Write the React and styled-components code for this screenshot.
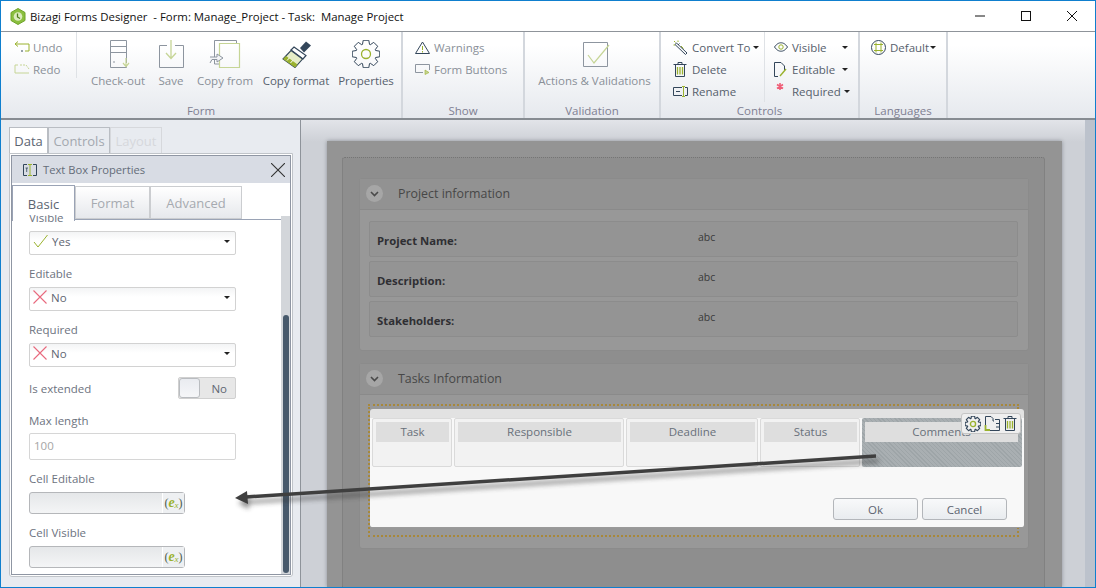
import React from 'react';
import styled, { createGlobalStyle } from 'styled-components';

const GlobalStyle = createGlobalStyle`
  html, body { margin: 0; padding: 0; background: #fff; }
  * { box-sizing: border-box; }
  body { font-family: "Open Sans", "Noto Sans", sans-serif; }
`;

const DARK = '#33465a';
const GREEN = '#9ab22e';
const FADE = '#8d959f';
const PALE = '#c6d596';

// gear outline used by Properties and the column toolbar
const gearPath = (c, outer, inner, teeth) => {
  const pts = [];
  const step = (Math.PI * 2) / teeth;
  for (let i = 0; i < teeth; i++) {
    const a = i * step - Math.PI / 2;
    [[-0.3, inner], [-0.17, outer], [0.17, outer], [0.3, inner]].forEach(([o, r]) => {
      pts.push(`${(c + Math.cos(a + o * step * 1.5) * r).toFixed(2)} ${(c + Math.sin(a + o * step * 1.5) * r).toFixed(2)}`);
    });
  }
  return `M${pts.join('L')}Z`;
};

const Window = styled.div`
  position: relative;
  width: 1096px;
  height: 588px;
  overflow: hidden;
  display: flex;
  flex-direction: column;
  border: 1px solid #0f7fce;
  background: #fff;
`;

const TitleBar = styled.div`
  height: 30px;
  flex: none;
  display: flex;
  align-items: center;
  padding-left: 9px;
  background: #fff;
`;

const TitleText = styled.div`
  margin-left: 4px;
  font-size: 11.4px;
  color: #111;
  white-space: pre;
`;

const WindowButtons = styled.div`
  margin-left: auto;
  display: flex;
  align-items: center;
`;

const WindowButton = styled.div`
  width: 46px;
  height: 30px;
  display: flex;
  align-items: center;
  justify-content: center;
`;

const Ribbon = styled.div`
  height: 89px;
  flex: none;
  display: flex;
  background: linear-gradient(#fff 15%, #e6e9ee);
  border-top: 1px solid #8f949a;
  border-bottom: 2px solid #878c92;
`;

const Group = styled.div`
  width: ${(p) => p.$w}px;
  flex: none;
  display: flex;
  flex-direction: column;
  border-right: 2px solid #d3d7dd;
`;

const GroupBody = styled.div`
  flex: 1;
  display: flex;
  min-height: 0;
`;

const GroupLabel = styled.div`
  height: 16px;
  margin-bottom: -1px;
  text-align: center;
  font-size: 11.5px;
  line-height: 16px;
  color: #7f8092;
`;

const SmallColumn = styled.div`
  width: ${(p) => p.$w}px;
  flex: none;
  margin-right: ${(p) => p.$after || 0}px;
  padding: 4px 0 0 ${(p) => p.$left || 0}px;
  display: flex;
  flex-direction: column;
  align-self: flex-start;
  height: ${(p) => (p.$short ? '46px' : 'auto')};
  border-right: ${(p) => (p.$sep ? '1px solid #dfe2e6' : 'none')};
`;

const SmallButton = styled.div`
  height: 22px;
  flex: none;
  display: flex;
  align-items: center;
  font-size: 11.5px;
  color: ${(p) => (p.$off ? '#8a9098' : '#56606c')};
  white-space: nowrap;
`;

const SmallIcon = styled.span`
  width: ${(p) => p.$w || 19}px;
  flex: none;
  display: flex;
  align-items: center;
`;

const Caret = styled.span`
  margin-left: ${(p) => p.$gap || 3}px;
  width: 0;
  height: 0;
  border-left: 3px solid transparent;
  border-right: 3px solid transparent;
  border-top: 3px solid #222;
`;

const LargeButton = styled.div`
  width: ${(p) => p.$w}px;
  flex: none;
  margin-left: ${(p) => p.$ml || 0}px;
  padding-top: 8px;
  display: flex;
  flex-direction: column;
  align-items: center;
  gap: 5px;
  font-size: 11.5px;
  line-height: 16px;
  color: ${(p) => (p.$off ? '#8a9098' : '#56606c')};
  white-space: nowrap;
`;

const LargeIcon = styled.svg`
  width: 32px;
  height: 28px;
  flex: none;
`;

const Main = styled.div`
  flex: 1;
  min-height: 0;
  display: flex;
`;

const SidePanel = styled.div`
  width: 300px;
  flex: none;
  padding: 7px 7px 0 8px;
  display: flex;
  flex-direction: column;
  background: #e8ebf0;
  border-right: 1px solid #8e939a;
`;

const SideTabs = styled.div`
  height: 27px;
  flex: none;
  margin-bottom: -1px;
  display: flex;
`;

const SideTab = styled.div`
  width: ${(p) => p.$w}px;
  flex: none;
  display: flex;
  align-items: center;
  justify-content: center;
  font-size: 13px;
  color: ${(p) => p.$color};
  background: ${(p) => (p.$active ? '#fff' : '#e8ebf0')};
  border: 1px solid ${(p) => p.$border};
  border-bottom: none;
`;

const SideBody = styled.div`
  height: 424px;
  flex: none;
  padding: 1px;
  background: #fff;
  border: 1px solid #c0c4c9;
  border-radius: 0 0 3px 3px;
`;

const PropsPanel = styled.div`
  height: 100%;
  display: flex;
  flex-direction: column;
  border: 1px solid #8f96a3;
  background: #fff;
`;

const PropsHeader = styled.div`
  height: 27px;
  flex: none;
  display: flex;
  align-items: center;
  padding: 0 5px 0 11px;
  background: #d8dce4;
  font-size: 11.2px;
  color: #646c79;
`;

const PropsTitle = styled.span`
  margin-left: 6px;
  flex: 1;
`;

const PropsTabs = styled.div`
  height: 37px;
  flex: none;
  padding-top: 3px;
  display: flex;
  border-bottom: 1px solid #9aa3b5;
`;

const PropsTab = styled.div`
  width: ${(p) => p.$w}px;
  height: ${(p) => (p.$active ? '36px' : '33px')};
  margin-top: ${(p) => (p.$active ? '-1px' : 0)};
  flex: none;
  position: relative;
  z-index: 2;
  display: flex;
  align-items: ${(p) => (p.$active ? 'flex-start' : 'center')};
  justify-content: center;
  padding-top: ${(p) => (p.$active ? '9px' : '1px')};
  font-size: 13px;
  color: ${(p) => (p.$active ? '#5b6471' : '#a6aab0')};
  background: ${(p) => (p.$active ? '#fff' : 'linear-gradient(#fff, #e6e8ec)')};
  border: 1px solid ${(p) => (p.$active ? '#9aa3b5' : '#cbcdd0')};
  border-bottom: ${(p) => (p.$active ? 'none' : '1px solid #cbcdd0')};
`;

const PropsBody = styled.div`
  flex: 1;
  min-height: 0;
  display: flex;
`;

const Form = styled.div`
  flex: 1;
  min-width: 0;
  margin-top: -5px;
  position: relative;
  z-index: 3;
  overflow: hidden;
  padding-left: 17px;
`;

const FormInner = styled.div`
  margin-top: -6px;
  display: flex;
  flex-direction: column;
  gap: 10px;
`;

const Field = styled.div`
  margin-top: ${(p) => p.$top || 0}px;
`;

const FieldLabel = styled.div`
  height: 18px;
  margin-bottom: 4px;
  font-size: 11.5px;
  line-height: 18px;
  color: #6d7380;
`;

const SelectBox = styled.div`
  width: 207px;
  height: 24px;
  display: flex;
  align-items: center;
  padding: 0 5px 4px 3px;
  font-size: 11.5px;
  color: #5f6672;
  background: linear-gradient(#f3f4f5, #fff 40%);
  border: 1px solid #d2d2d2;
  border-radius: 2px;
`;

const SelectValue = styled.span`
  margin-left: 4px;
  flex: 1;
`;

const ToggleRow = styled.div`
  width: 207px;
  height: 22px;
  display: flex;
  align-items: center;
  justify-content: space-between;
  font-size: 11.5px;
  color: #6d7380;
`;

const Toggle = styled.div`
  width: 58px;
  height: 22px;
  display: flex;
  align-items: center;
  justify-content: space-between;
  padding-right: 8px;
  font-size: 11.5px;
  color: #5f6672;
  background: #e7e7e7;
  border: 1px solid #d0d0d0;
  border-radius: 2px;
`;

const ToggleKnob = styled.span`
  width: 21px;
  height: 20px;
  background: linear-gradient(#e9ebf0, #f5f6f8);
  border: 1px solid #b9bcc0;
  border-radius: 3px;
`;

const NumberInput = styled.div`
  width: 207px;
  height: 27px;
  margin-top: -1px;
  display: flex;
  align-items: center;
  padding: 0 0 3px 4px;
  font-size: 11.5px;
  color: #a5a5a5;
  background: #fff;
  border: 1px solid #d6d6d6;
  border-radius: 2px;
`;

const ExprBox = styled.div`
  width: 156px;
  height: 22px;
  display: flex;
  justify-content: flex-end;
  background: linear-gradient(#e5e7e9, #f4f5f6);
  border: 1px solid #b5b7ba;
  border-radius: 3px;
`;

const ExprButton = styled.div`
  width: 22px;
  display: flex;
  align-items: center;
  justify-content: center;
  font-family: "Liberation Serif", serif;
  font-size: 12px;
  color: #4b5a4e;
  background: #eef0f2;
  border-left: 1px solid #fff;
`;

const ExprE = styled.span`
  font-weight: bold;
  font-style: italic;
  font-size: 14px;
  color: ${GREEN};
`;

const ExprX = styled.span`
  font-style: italic;
  font-size: 9px;
  margin-top: 4px;
  color: ${GREEN};
`;

const ScrollTrack = styled.div`
  width: 9px;
  flex: none;
  margin-top: -4px;
  position: relative;
  z-index: 1;
  padding: 99px 1px 1px 2px;
  background: #d3d6da;
`;

const ScrollThumb = styled.div`
  height: 100%;
  background: #47596b;
  border-radius: 3px;
`;

const Canvas = styled.div`
  flex: 1;
  min-width: 0;
  display: flex;
  background: linear-gradient(#e2e4e9, #cdd0d6 22px);
`;

const CanvasInner = styled.div`
  flex: 1;
  min-width: 0;
  padding: 21px 0 0 26px;
`;

const Page = styled.div`
  width: 735px;
  height: 100%;
  padding: 16px 17px 0 15px;
  background: #949494;
  box-shadow: 0 0 4px #8b8f96;
`;

const InnerPanel = styled.div`
  height: 100%;
  padding: 20px 15px 0 16px;
  background: #8e8e8e;
  border-top: 1px dotted #757575;
  border-left: 1px dotted #757575;
  border-right: 1px dotted #757575;
  border-radius: 3px 3px 0 0;
`;

const Section = styled.div`
  margin-bottom: 12px;
  background: #989898;
  border: 1px solid #8b8b8b;
  border-radius: 3px;
`;

const SectionHeader = styled.div`
  height: 31px;
  display: flex;
  align-items: center;
  padding: 0 0 1px 6px;
  font-size: 12.4px;
  color: #474747;
  background: #929292;
  border-bottom: 1px solid #8a8a8a;
`;

const Chevron = styled.span`
  width: 17px;
  height: 17px;
  margin-right: 15px;
  flex: none;
  display: flex;
  align-items: center;
  justify-content: center;
  border-radius: 50%;
  background: #a6a6a6;
`;

const SectionBody = styled.div`
  padding: 11px 10px 13px 9px;
  display: flex;
  flex-direction: column;
  gap: 4px;
`;

const InfoRow = styled.div`
  height: 36px;
  display: grid;
  grid-template-columns: 321px 1fr;
  padding: 0 7px;
  background: #949494;
  border: 1px solid #8c8c8c;
  border-radius: 2px;
`;

const InfoLabel = styled.div`
  padding-top: 11px;
  font-size: 11.3px;
  font-weight: 700;
  color: #2f2f33;
`;

const InfoValue = styled.div`
  padding-top: 8px;
  font-size: 10.5px;
  color: #3a3a3a;
`;

const TableBody = styled.div`
  padding: 9px 9px 11px 8px;
`;

const Selection = styled.div`
  position: relative;
  height: 133px;
  border: 2px dotted #a8883a;
`;

const Modal = styled.div`
  position: absolute;
  left: 0;
  top: 3px;
  z-index: 3;
  width: 654px;
  height: 119px;
  padding-top: 9px;
  display: flex;
  flex-direction: column;
  background: linear-gradient(#e2e2e2, #e2e2e2 9px, #f8f8f8 9px);
  border-bottom: 1px solid #9a9a9a;
  border-radius: 3px;
`;

const Columns = styled.div`
  height: 49px;
  flex: none;
  padding-left: 2px;
  display: flex;
  gap: 2px;
`;

const Column = styled.div`
  width: ${(p) => p.$w}px;
  flex: none;
  padding: ${(p) => (p.$selected ? '4px 4px 4px 3px' : '3px 2px 3px 3px')};
  text-align: center;
  background: ${(p) =>
    p.$selected
      ? 'repeating-linear-gradient(45deg, #9ea5a8, #9ea5a8 1px, #a9afb2 1px, #a9afb2 3px)'
      : '#f2f2f2'};
  border: ${(p) => (p.$selected ? 'none' : '1px solid #dadada')};
  border-radius: 2px;
`;

const ColumnHead = styled.div`
  height: 20px;
  font-size: 11.5px;
  line-height: 20px;
  color: #68707a;
  background: #dedede;
`;

const ModalFooter = styled.div`
  margin-top: auto;
  padding: 0 17px 7px 0;
  display: flex;
  justify-content: flex-end;
  gap: 4px;
`;

const ModalButton = styled.div`
  width: 85px;
  height: 22px;
  display: flex;
  align-items: center;
  justify-content: center;
  font-size: 11.5px;
  color: #5c6470;
  background: linear-gradient(#f8f9fa, #e9ecef);
  border: 1px solid #b3b6ba;
  border-radius: 3px;
`;

const ColumnTools = styled.div`
  position: absolute;
  right: 3px;
  top: 4px;
  z-index: 4;
  width: 60px;
  height: 21px;
  display: flex;
  align-items: center;
  justify-content: space-between;
  padding: 0 3px;
  background: #efefef;
  border: 1px solid #c5c5c5;
  border-radius: 3px;
`;

const RightScroll = styled.div`
  width: 10px;
  flex: none;
  background: #bcc2cc;
`;

const ArrowOverlay = styled.svg`
  position: absolute;
  left: -1px;
  top: -1px;
  z-index: 10;
  pointer-events: none;
`;

const Check = () => (
  <svg width="15" height="14" viewBox="0 0 15 14"><path d="M1 8L5 13L14.5 1" fill="none" stroke={GREEN} strokeWidth="1" /></svg>
);

const Cross = () => (
  <svg width="14" height="14" viewBox="0 0 14 14"><path d="M.5 .5L13.5 13.5M13.5 .5L.5 13.5" fill="none" stroke="#e8697d" strokeWidth="1.1" /></svg>
);

const Gear = ({ size = 28 }) => (
  <svg width={size} height={size} viewBox="0 0 28 28" fill="none">
    <path d={gearPath(14, 14, 10.2, 8)} stroke={DARK} strokeWidth={size < 20 ? 2 : 1} strokeLinejoin="round" />
    <circle cx="14" cy="14" r="4.5" stroke={GREEN} strokeWidth={size < 20 ? 2.4 : 1.3} />
  </svg>
);

const TrashIcon = () => (
  <svg width="14" height="15" viewBox="0 0 14 15" fill="none">
    <path d="M.5 2.5H13.5M5 2.5V.5H9V2.5M2.5 2.5V14.5H11.5V2.5" stroke={DARK} />
    <path d="M4.5 5V12.5M7 5V12.5M9.5 5V12.5" stroke={GREEN} strokeWidth="1.3" />
  </svg>
);

const ChevronIcon = () => (
  <svg width="9" height="6" viewBox="0 0 9 6" fill="none"><path d="M1 1L4.5 4.5L8 1" stroke="#4a4a4a" strokeWidth="1.6" /></svg>
);

const ExprTag = () => (
  <ExprBox>
    <ExprButton>(<ExprE>e</ExprE><ExprX>x</ExprX>)</ExprButton>
  </ExprBox>
);

const SelectField = ({ label, icon, value }) => (
  <Field>
    <FieldLabel>{label}</FieldLabel>
    <SelectBox>
      {icon}
      <SelectValue>{value}</SelectValue>
      <Caret />
    </SelectBox>
  </Field>
);

const InfoLine = ({ label }) => (
  <InfoRow>
    <InfoLabel>{label}</InfoLabel>
    <InfoValue>abc</InfoValue>
  </InfoRow>
);

export default function App() {
  return (
    <>
      <GlobalStyle />
      <Window>
        <TitleBar>
          <svg width="16" height="17" viewBox="0 0 16 17">
            <path d="M8 .5L15 4.5V12.5L8 16.5L1 12.5V4.5Z" fill="#8bbf3f" stroke="#6fa32a" />
            <circle cx="8" cy="8.5" r="4.3" fill="#dcebc0" />
            <path d="M7.5 5.5V9L10 10.5" fill="none" stroke="#4d7d18" strokeWidth="1.3" />
          </svg>
          <TitleText>Bizagi Forms Designer  - Form: Manage_Project - Task:  Manage Project</TitleText>
          <WindowButtons>
            <WindowButton>
              <svg width="10" height="10" viewBox="0 0 10 10"><path d="M0 5H10" stroke="#111" /></svg>
            </WindowButton>
            <WindowButton>
              <svg width="10" height="10" viewBox="0 0 10 10"><rect x=".5" y=".5" width="9" height="9" fill="none" stroke="#111" /></svg>
            </WindowButton>
            <WindowButton>
              <svg width="10" height="10" viewBox="0 0 10 10"><path d="M0 0L10 10M10 0L0 10" stroke="#111" /></svg>
            </WindowButton>
          </WindowButtons>
        </TitleBar>

        <Ribbon>
          <Group $w={402}>
            <GroupBody>
              <SmallColumn $w={76} $left={13} $after={7} $sep $short>
                <SmallButton $off>
                  <SmallIcon>
                    <svg width="16" height="12" viewBox="0 0 16 12" fill="none">
                      <path d="M1 3H15V10H11" stroke={GREEN} />
                      <path d="M4 .5L1 3L4 5.5" stroke={GREEN} />
                      <path d="M9 10H7" stroke={DARK} />
                    </svg>
                  </SmallIcon>
                  Undo
                </SmallButton>
                <SmallButton $off>
                  <SmallIcon>
                    <svg width="16" height="12" viewBox="0 0 16 12" fill="none" stroke={PALE}>
                      <path d="M4 2H1V10H15" />
                      <path d="M6 2H12L15 6" strokeDasharray="2 1" />
                    </svg>
                  </SmallIcon>
                  Redo
                </SmallButton>
              </SmallColumn>
              <LargeButton $w={68} $off>
                <LargeIcon viewBox="0 0 32 28" fill="none">
                  <path d="M8.5 .5H24.5V27.5H8.5Z" stroke={FADE} />
                  <path d="M8.5 6.5H24.5M8.5 12.5H24.5M11 22H13" stroke={FADE} />
                  <path d="M24 18V26M21 23L24 26.5L27 23" stroke={PALE} strokeWidth="1.2" fill="#fff" />
                </LargeIcon>
                Check-out
              </LargeButton>
              <LargeButton $w={38} $off>
                <LargeIcon viewBox="0 0 32 28" fill="none">
                  <path d="M12 5.5H4.5V27.5H28.5V5.5H20" stroke={FADE} />
                  <path d="M16 0V18M11 13L16 18.5L21 13" stroke={PALE} strokeWidth="1.3" />
                </LargeIcon>
                Save
              </LargeButton>
              <LargeButton $w={70} $off>
                <LargeIcon viewBox="0 0 32 28" fill="none">
                  <path d="M5.5 .5H27.5V3M5.5 .5V24H10" stroke={FADE} />
                  <path d="M10.5 3.5H30.5V27.5H10.5Z" stroke={PALE} strokeWidth="1.2" />
                  <path d="M1 17H8V14L14 18L8 22V19.5H3L1 23" stroke={FADE} fill="#f3f4f6" />
                </LargeIcon>
                Copy from
              </LargeButton>
              <LargeButton $w={72}>
                <LargeIcon viewBox="0 0 32 28">
                  <path d="M20 8L26 1.5L31 5.5L24 12.5Z" fill={DARK} />
                  <path d="M14 7L26 15.5L23 19L11 10Z" fill="#fff" stroke={DARK} strokeWidth="1.2" />
                  <path d="M11 10.5L22.5 19L15 27.5L3 19Z" fill="#e6edc7" stroke={DARK} strokeWidth="1.1" />
                  <path d="M3 19L15 27.5L17.5 24.5L6 16Z" fill={GREEN} />
                  <path d="M7 20.5L9.5 17.8M10.5 23L13 20.2" stroke="#fff" />
                </LargeIcon>
                Copy format
              </LargeButton>
              <LargeButton $w={68}>
                <Gear />
                Properties
              </LargeButton>
            </GroupBody>
            <GroupLabel>Form</GroupLabel>
          </Group>

          <Group $w={122}>
            <GroupBody>
              <SmallColumn $w={120} $left={12}>
                <SmallButton $off>
                  <SmallIcon>
                    <svg width="15" height="13" viewBox="0 0 15 13" fill="none">
                      <path d="M7.5 1L14.5 12.5H.5Z" stroke={DARK} />
                      <path d="M7.5 5V9M7.5 10V11.5" stroke={GREEN} />
                    </svg>
                  </SmallIcon>
                  Warnings
                </SmallButton>
                <SmallButton $off>
                  <SmallIcon>
                    <svg width="15" height="11" viewBox="0 0 15 11" fill="none">
                      <path d="M8 8.5H.5V.5H14.5V6" stroke={FADE} />
                      <path d="M10 6V10.5L14 8.5Z" fill={PALE} stroke={GREEN} strokeWidth=".6" />
                    </svg>
                  </SmallIcon>
                  Form Buttons
                </SmallButton>
              </SmallColumn>
            </GroupBody>
            <GroupLabel>Show</GroupLabel>
          </Group>

          <Group $w={136}>
            <GroupBody>
              <LargeButton $w={129} $ml={5} $off>
                <LargeIcon viewBox="0 0 32 28" fill="none">
                  <path d="M4.5 2.5H28.5V26.5H4.5Z" stroke={FADE} />
                  <path d="M9 15L15 23L30 5" stroke={PALE} strokeWidth="1.2" />
                </LargeIcon>
                Actions &amp; Validations
              </LargeButton>
            </GroupBody>
            <GroupLabel>Validation</GroupLabel>
          </Group>

          <Group $w={199}>
            <GroupBody>
              <SmallColumn $w={104} $left={12} $sep>
                <SmallButton>
                  <SmallIcon>
                    <svg width="15" height="15" viewBox="0 0 15 15" fill="none">
                      <path d="M3.5 3L14 13L12.5 14.5L2 4.5Z" stroke={DARK} />
                      <path d="M5 5L6.5 3.5" stroke={DARK} />
                      <path d="M1 1L2.5 2.5M5 .5V2M.5 5H2M8 6L10.5 8.5" stroke={GREEN} />
                    </svg>
                  </SmallIcon>
                  Convert To
                  <Caret />
                </SmallButton>
                <SmallButton>
                  <SmallIcon><TrashIcon /></SmallIcon>
                  Delete
                </SmallButton>
                <SmallButton>
                  <SmallIcon>
                    <svg width="15" height="11" viewBox="0 0 15 11" fill="none">
                      <path d="M9 1.5H.5V9.5H9M12 1.5H14.5V9.5H12" stroke={DARK} />
                      <path d="M3 5.5H7" stroke={DARK} />
                      <path d="M9 .5H12M10.5 .5V10.5M9 10.5H12" stroke={GREEN} />
                    </svg>
                  </SmallIcon>
                  Rename
                </SmallButton>
              </SmallColumn>
              <SmallColumn $w={90} $left={9}>
                <SmallButton>
                  <SmallIcon $w={18}>
                    <svg width="14" height="10" viewBox="0 0 14 10" fill="none">
                      <path d="M.5 5C3 1.5 5 .8 7 .8S11 1.5 13.5 5C11 8.5 9 9.2 7 9.2S3 8.5 .5 5Z" stroke={DARK} />
                      <circle cx="7" cy="5" r="2.2" stroke={GREEN} />
                    </svg>
                  </SmallIcon>
                  Visible
                  <Caret $gap={15} />
                </SmallButton>
                <SmallButton>
                  <SmallIcon $w={18}>
                    <svg width="13" height="15" viewBox="0 0 13 15" fill="none">
                      <path d="M4 14.5H.5V.5H7L10.5 4V9" stroke={DARK} />
                      <path d="M6 14L12 7" stroke={GREEN} strokeWidth="1.4" />
                    </svg>
                  </SmallIcon>
                  Editable
                  <Caret $gap={7} />
                </SmallButton>
                <SmallButton>
                  <SmallIcon $w={18}>
                    <svg width="12" height="18" viewBox="0 0 12 18" fill="none">
                      <path d="M6 1V8M3 2.5L9 6.5M9 2.5L3 6.5" stroke="#ef5f78" strokeWidth="1.6" />
                    </svg>
                  </SmallIcon>
                  Required
                  <Caret />
                </SmallButton>
              </SmallColumn>
            </GroupBody>
            <GroupLabel>Controls</GroupLabel>
          </Group>

          <Group $w={88}>
            <GroupBody>
              <SmallColumn $w={86} $left={11}>
                <SmallButton>
                  <SmallIcon>
                    <svg width="15" height="15" viewBox="0 0 15 15" fill="none">
                      <circle cx="7.5" cy="7.5" r="7" stroke={DARK} />
                      <path d="M3 4.5H12M3 10.5H12M5 2.5V12.5M10 2.5V12.5" stroke={GREEN} />
                    </svg>
                  </SmallIcon>
                  Default
                  <Caret $gap={1} />
                </SmallButton>
              </SmallColumn>
            </GroupBody>
            <GroupLabel>Languages</GroupLabel>
          </Group>
        </Ribbon>

        <Main>
          <SidePanel>
            <SideTabs>
              <SideTab $w={39} $active $color="#5b6471" $border="#b9bdc3">Data</SideTab>
              <SideTab $w={62} $color="#a3a8af" $border="#b9bdc3">Controls</SideTab>
              <SideTab $w={52} $color="#d6d8dc" $border="#d6d8dc">Layout</SideTab>
            </SideTabs>
            <SideBody>
              <PropsPanel>
                <PropsHeader>
                  <svg width="14" height="12" viewBox="0 0 14 12" fill="none">
                    <path d="M4 .5H.5V11.5H4M10 .5H13.5V11.5H10" stroke={DARK} />
                    <path d="M5 .5H9M7 .5V11.5M5 11.5H9" stroke={GREEN} />
                    <path d="M2.5 4H5M3.7 4V8" stroke={DARK} strokeWidth=".8" />
                  </svg>
                  <PropsTitle>Text Box Properties</PropsTitle>
                  <svg width="14" height="14" viewBox="0 0 14 14"><path d="M0 0L14 14M14 0L0 14" stroke="#333" strokeWidth="1.1" /></svg>
                </PropsHeader>
                <PropsTabs>
                  <PropsTab $w={63} $active>Basic</PropsTab>
                  <PropsTab $w={75}>Format</PropsTab>
                  <PropsTab $w={92}>Advanced</PropsTab>
                </PropsTabs>
                <PropsBody>
                  <Form>
                    <FormInner>
                      <SelectField label="Visible" icon={<Check />} value="Yes" />
                      <SelectField label="Editable" icon={<Cross />} value="No" />
                      <SelectField label="Required" icon={<Cross />} value="No" />
                      <ToggleRow>
                        Is extended
                        <Toggle>
                          <ToggleKnob />
                          No
                        </Toggle>
                      </ToggleRow>
                      <Field $top={3}>
                        <FieldLabel>Max length</FieldLabel>
                        <NumberInput>100</NumberInput>
                      </Field>
                      <Field>
                        <FieldLabel>Cell Editable</FieldLabel>
                        <ExprTag />
                      </Field>
                      <Field>
                        <FieldLabel>Cell Visible</FieldLabel>
                        <ExprTag />
                      </Field>
                    </FormInner>
                  </Form>
                  <ScrollTrack>
                    <ScrollThumb />
                  </ScrollTrack>
                </PropsBody>
              </PropsPanel>
            </SideBody>
          </SidePanel>

          <Canvas>
            <CanvasInner>
              <Page>
                <InnerPanel>
                  <Section>
                    <SectionHeader>
                      <Chevron><ChevronIcon /></Chevron>
                      Project information
                    </SectionHeader>
                    <SectionBody>
                      <InfoLine label="Project Name:" />
                      <InfoLine label="Description:" />
                      <InfoLine label="Stakeholders:" />
                    </SectionBody>
                  </Section>
                  <Section>
                    <SectionHeader>
                      <Chevron><ChevronIcon /></Chevron>
                      Tasks Information
                    </SectionHeader>
                    <TableBody>
                      <Selection>
                        <Modal>
                          <Columns>
                            <Column $w={80}><ColumnHead>Task</ColumnHead></Column>
                            <Column $w={170}><ColumnHead>Responsible</ColumnHead></Column>
                            <Column $w={132}><ColumnHead>Deadline</ColumnHead></Column>
                            <Column $w={100}><ColumnHead>Status</ColumnHead></Column>
                            <Column $w={160} $selected><ColumnHead>Comments</ColumnHead></Column>
                          </Columns>
                          <ModalFooter>
                            <ModalButton>Ok</ModalButton>
                            <ModalButton>Cancel</ModalButton>
                          </ModalFooter>
                          <ColumnTools>
                            <Gear size={16} />
                            <svg width="16" height="15" viewBox="0 0 16 15" fill="none">
                              <path d="M1.5 9V.5H7L9 2.5V5H10M11 3.5H15.5V14.5H5" stroke={DARK} />
                              <path d="M1.5 9V14H6" stroke={GREEN} strokeWidth="1.8" />
                              <path d="M12 7.5H15M12 11H15" stroke={DARK} />
                            </svg>
                            <TrashIcon />
                          </ColumnTools>
                        </Modal>
                      </Selection>
                    </TableBody>
                  </Section>
                </InnerPanel>
              </Page>
            </CanvasInner>
            <RightScroll />
          </Canvas>
        </Main>

        <ArrowOverlay width="1096" height="588" viewBox="0 0 1096 588">
          <defs>
            <filter id="arrowShadow" x="-5%" y="-50%" width="110%" height="200%">
              <feGaussianBlur stdDeviation="2.5" />
            </filter>
          </defs>
          <g filter="url(#arrowShadow)" opacity=".55" transform="translate(3 5)">
            <path d="M876 456L246 497" stroke="#333" strokeWidth="3.5" />
            <path d="M235 498L247 491L246 504Z" fill="#333" />
          </g>
          <path d="M876 456L246 497" stroke="#3f3f3f" strokeWidth="3.5" />
          <path d="M235 498L247 491L248 504Z" fill="#3f3f3f" />
        </ArrowOverlay>
      </Window>
    </>
  );
}
